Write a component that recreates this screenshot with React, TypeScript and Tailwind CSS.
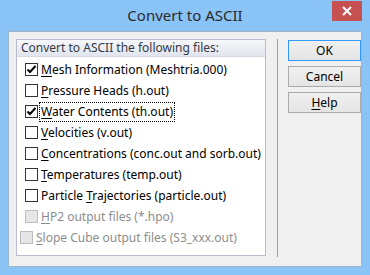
import React from "react";

const font = { fontFamily: '"Segoe UI", "Noto Sans", "Liberation Sans", sans-serif' };

function Check({ checked, disabled }: { checked?: boolean; disabled?: boolean }) {
  return (
    <div
      className={
        "w-[13px] h-[13px] border flex-none flex items-center justify-center " +
        (disabled ? "border-[#bcbcbc] bg-[#e6e6e6]" : "border-[#333333] bg-white")
      }
    >
      {checked && (
        <svg width="11" height="11" viewBox="0 0 11 11">
          <path d="M1.5 5.5 L4 8 L9.5 2" fill="none" stroke="#000" strokeWidth="2" />
        </svg>
      )}
    </div>
  );
}

function Row({
  pre = "",
  k,
  rest,
  checked,
  disabled,
  focus,
  indent = true,
}: {
  pre?: string;
  k: string;
  rest: string;
  checked?: boolean;
  disabled?: boolean;
  focus?: boolean;
  indent?: boolean;
}) {
  return (
    <div className={"h-[21px] flex items-center " + (indent ? "pl-[8px]" : "pl-[3px]")}>
      <Check checked={checked} disabled={disabled} />
      <span
        className={
          "ml-[2px] px-[1px] leading-[18px] whitespace-nowrap " +
          (disabled ? "text-[#8d8d8d]" : "text-black") +
          (focus ? " outline outline-1 outline-dotted outline-black" : "")
        }
      >
        {pre}
        <span className="underline underline-offset-2 decoration-1">{k}</span>
        {rest}
      </span>
    </div>
  );
}

function Btn({ children, def }: { children: React.ReactNode; def?: boolean }) {
  return (
    <div
      className={
        "w-[73px] h-[21px] flex items-center justify-center border bg-gradient-to-b from-[#f0f0f0] to-[#e5e5e5] text-black " +
        (def ? "border-[#3399ff]" : "border-[#acacac]")
      }
    >
      {children}
    </div>
  );
}

export default function App() {
  return (
    <div className="w-[370px] h-[275px] bg-[#8ac3f5] relative text-[12px]" style={font}>
      <div className="h-[31px] flex items-center justify-center">
        <span className="text-[15px] text-[#2b2b2b] -mt-[1px]">Convert to ASCII</span>
      </div>
      <div className="absolute right-[8px] top-[1px] w-[30px] h-[20px] bg-[#c75050] flex items-center justify-center">
        <svg width="10" height="10" viewBox="0 0 10 10">
          <path d="M1 1 L9 9 M9 1 L1 9" stroke="#fff" strokeWidth="2" />
        </svg>
      </div>
      <div className="mx-[8px] h-[236px] bg-[#f0f0f0] border border-[#9db4cb] flex pt-[7px] pl-[7px]">
        <div className="w-[250px] h-[217px] border border-[#b9bccd] bg-white flex flex-col">
          <div className="h-[17px] bg-gradient-to-b from-[#f7f8fb] to-[#e1e4ee] border-b border-[#d5d8e3] flex items-center pl-[4px] text-[#333a46]">
            Convert to ASCII the following files:
          </div>
          <div className="pt-[2px]">
            <Row k="M" rest="esh Information (Meshtria.000)" checked />
            <Row k="P" rest="ressure Heads (h.out)" />
            <Row k="W" rest="ater Contents (th.out)" checked focus />
            <Row k="V" rest="elocities (v.out)" />
            <Row k="C" rest="oncentrations (conc.out and sorb.out)" />
            <Row k="T" rest="emperatures (temp.out)" />
            <Row pre="Particle " k="T" rest="rajectories (particle.out)" />
            <Row k="H" rest="P2 output files (*.hpo)" disabled />
            <Row k="S" rest="lope Cube output files (S3_xxx.out)" disabled indent={false} />
          </div>
        </div>
        <div className="ml-[11px] w-[1px] h-[218px] bg-[#a0a0a0]" />
        <div className="ml-[10px] flex flex-col gap-[5px] pt-[1px]">
          <Btn def>OK</Btn>
          <Btn>Cancel</Btn>
          <Btn>
            <span>
              <span className="underline underline-offset-2 decoration-1">H</span>elp
            </span>
          </Btn>
        </div>
      </div>
    </div>
  );
}
